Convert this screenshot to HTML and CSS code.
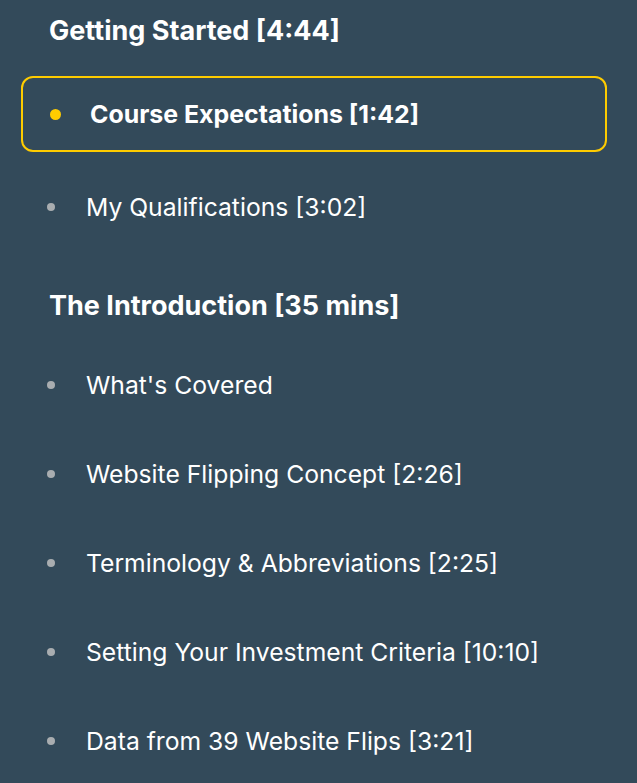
FILE: index.html
```html
<!DOCTYPE html>
<html lang="en">

<head>
    <meta charset="UTF-8">
    <meta name="viewport" content="width=device-width, initial-scale=1.0">
    <title>Course Curriculum</title>
    <link rel="stylesheet" href="styles.css">
</head>

<body>

    <div class="curriculum">
        <h3 class="section-title first">Getting Started [4:44]</h3>
        <ul class="lessons">
            <li class="lesson active"><span class="dot"></span>Course Expectations [1:42]</li>
            <li class="lesson"><span class="dot"></span>My Qualifications [3:02]</li>
        </ul>

        <h3 class="section-title">The Introduction [35 mins]</h3>
        <ul class="lessons">
            <li class="lesson"><span class="dot"></span>What's Covered</li>
            <li class="lesson"><span class="dot"></span>Website Flipping Concept [2:26]</li>
            <li class="lesson"><span class="dot"></span>Terminology &amp; Abbreviations [2:25]</li>
            <li class="lesson"><span class="dot"></span>Setting Your Investment Criteria [10:10]</li>
            <li class="lesson"><span class="dot"></span>Data from 39 Website Flips [3:21]</li>
        </ul>
    </div>

</body>

</html>
```

FILE: styles.css
```css
body {
    margin: 0;
    background-color: #334a5a;
    color: #fff;
    font-family: 'Inter', 'Noto Sans', sans-serif;
    overflow: hidden;
}

.curriculum {
    padding: 16px 30px 0 0;
}

.section-title {
    margin: 40px 0 19px 49px;
    font-size: 27px;
    line-height: 30px;
    font-weight: 700;
}

.section-title.first {
    margin-top: 0;
    margin-bottom: 30px;
}

.lessons {
    list-style: none;
    margin: 0;
    padding: 0;
}

.lesson {
    display: flex;
    align-items: center;
    height: 89px;
    padding-left: 47px;
    font-size: 24.7px;
    font-weight: 400;
}

.dot {
    width: 8px;
    height: 8px;
    border-radius: 50%;
    background-color: #a9adb0;
    margin-right: 31px;
    flex-shrink: 0;
}

/* current lesson */
.lesson.active {
    height: 72px;
    margin: 0 0 10px 21px;
    padding-left: 27px;
    border: 2px solid #ffcc00;
    border-radius: 12px;
    font-size: 24.9px;
    font-weight: 700;
}

.lesson.active .dot {
    width: 11px;
    height: 11px;
    background-color: #ffcc00;
    margin-right: 29px;
}
```
